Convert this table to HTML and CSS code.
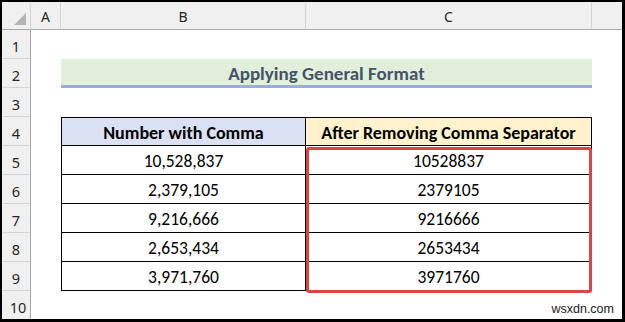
FILE: index.html
```html
<!DOCTYPE html>
<html>
<head>
<meta charset="utf-8">
<link rel="stylesheet" href="styles.css">
</head>
<body>
<div class="frame">
  <div class="sheet">
    <div class="corner"><span class="tri"></span></div>
    <div class="colhead">A</div>
    <div class="colhead">B</div>
    <div class="colhead">C</div>
    <div class="colhead last"></div>

    <div class="rowhead r1">1</div>
    <div class="rowhead r2">2</div>
    <div class="rowhead r3">3</div>
    <div class="rowhead r4">4</div>
    <div class="rowhead r5">5</div>
    <div class="rowhead r6">6</div>
    <div class="rowhead r7">7</div>
    <div class="rowhead r8">8</div>
    <div class="rowhead r9">9</div>
    <div class="rowhead r10">10</div>

    <div class="title">Applying General Format</div>

    <div class="table">
      <div class="th th-b">Number with Comma</div>
      <div class="th th-c">After Removing Comma Separator</div>
      <div class="td">10,528,837</div><div class="td">10528837</div>
      <div class="td">2,379,105</div><div class="td">2379105</div>
      <div class="td">9,216,666</div><div class="td">9216666</div>
      <div class="td">2,653,434</div><div class="td">2653434</div>
      <div class="td">3,971,760</div><div class="td">3971760</div>
    </div>

    <div class="highlight"></div>
  </div>
  <div class="watermark">wsxdn.com</div>
</div>
</body>
</html>
```
FILE: styles.css
```css
* { box-sizing: border-box; }
html, body { margin: 0; padding: 0; background: #fff; }
body { width: 625px; height: 322px; overflow: hidden; }

.frame {
  position: relative;
  width: 625px;
  height: 322px;
  border-style: solid;
  border-color: #000;
  border-width: 2px 3px 3px 2px;
  overflow: hidden;
  background: #fff;
}

.sheet {
  display: grid;
  grid-template-columns: 29px 30px 245px 286px 30px;
  grid-template-rows: 28px repeat(10, 29px);
  font-family: "Carlito", "Lato", "Liberation Sans", sans-serif;
  color: #000;
}

.corner {
  grid-column: 1; grid-row: 1;
  background: #f0f0f0;
  border-right: 1px solid #d4d4d4;
  border-bottom: 1px solid #ababab;
  position: relative;
}
.tri {
  position: absolute;
  right: 4px; bottom: 4px;
  width: 0; height: 0;
  border-style: solid;
  border-width: 0 0 12px 12px;
  border-color: transparent transparent #b4b4b4 transparent;
}

.colhead {
  background: #f0f0f0;
  border-right: 1px solid #d4d4d4;
  border-bottom: 1px solid #ababab;
  display: flex; align-items: center; justify-content: center;
  font-family: "Noto Sans", "Liberation Sans", sans-serif;
  font-size: 14px;
  color: #262626;
  padding-top: 2px;
}
.colhead.last { border-right: none; }

.rowhead {
  grid-column: 1;
  background: #f0f0f0;
  border-right: 1px solid #a6a6a6;
  border-bottom: 1px solid #d4d4d4;
  display: flex; align-items: center; justify-content: center;
  font-family: "Noto Sans", "Liberation Sans", sans-serif;
  font-size: 14.5px;
  color: #262626;
  padding-top: 3px;
}
.r1 { grid-row: 2; } .r2 { grid-row: 3; } .r3 { grid-row: 4; }
.r4 { grid-row: 5; } .r5 { grid-row: 6; } .r6 { grid-row: 7; }
.r7 { grid-row: 8; } .r8 { grid-row: 9; } .r9 { grid-row: 10; }
.r10 { grid-row: 11; padding-left: 4px; }

.title {
  grid-column: 3 / 5; grid-row: 3;
  background: #e2efda;
  border-bottom: 3px solid #9bafd6;
  display: flex; align-items: center; justify-content: center;
  font-weight: bold;
  font-size: 19px;
  color: #44546a;
  padding-top: 2px;
}

.table {
  grid-column: 3 / 5; grid-row: 5 / 11;
  display: grid;
  grid-template-columns: 245px 286px;
  grid-template-rows: repeat(6, 29px);
  margin-bottom: -1px;
}
.th, .td {
  display: flex; align-items: center; justify-content: center;
  font-size: 17.5px;
  border-right: 1px solid #000;
  border-bottom: 1px solid #000;
  padding-top: 2px;
}
.th { font-weight: bold; font-size: 18px; border-top: 1px solid #000; }
.table > :nth-child(odd) { border-left: 1px solid #000; }
.table > :nth-child(even) { border-left: none; }
.th-b { background: #d9e1f2; }
.th-c { background: #fff2cc; }

.highlight {
  grid-column: 4; grid-row: 6 / 11;
  margin: 1px 0 -2px 0;
  border: 3px solid #dc4343;
  border-radius: 3px;
  z-index: 2;
}

.watermark {
  position: absolute;
  right: 8px; bottom: 3px;
  font-family: "Liberation Sans", Arial, sans-serif;
  font-size: 12.5px;
  color: #1a1a1a;
}
```
